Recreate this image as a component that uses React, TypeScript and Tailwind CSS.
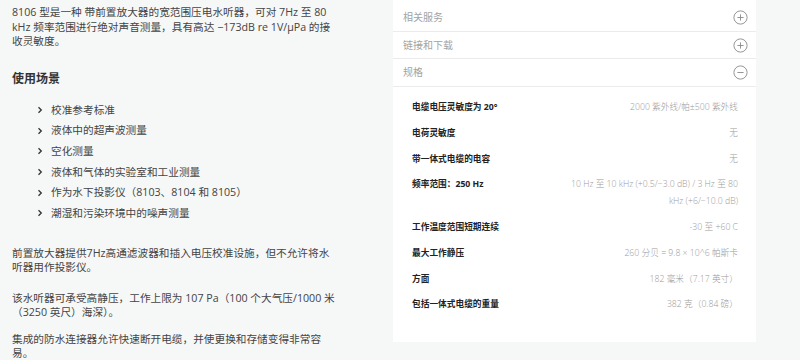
import React from "react";

const FONT = '"Open Sans", "Noto Sans CJK SC", sans-serif';

function Chevron() {
  return (
    <svg width="6" height="8" viewBox="0 0 6 8" className="shrink-0">
      <path d="M1.5 1.2 L4.3 4 L1.5 6.8" fill="none" stroke="#333" strokeWidth="1.3" />
    </svg>
  );
}

function CircleIcon({ plus }: { plus: boolean }) {
  return (
    <svg width="15" height="15" viewBox="0 0 15 15">
      <circle cx="7.5" cy="7.5" r="6.6" fill="none" stroke="#8a8a8a" strokeWidth="0.9" />
      <path d="M4.4 7.5 H10.6" stroke="#8a8a8a" strokeWidth="0.9" />
      {plus && <path d="M7.5 4.4 V10.6" stroke="#8a8a8a" strokeWidth="0.9" />}
    </svg>
  );
}

const uses = [
  "校准参考标准",
  "液体中的超声波测量",
  "空化测量",
  "液体和气体的实验室和工业测量",
  "作为水下投影仪（8103、8104 和 8105）",
  "潮湿和污染环境中的噪声测量",
];

const specs: [string, React.ReactNode][] = [
  ["电缆电压灵敏度为 20°", "2000 紫外线/帕±500 紫外线"],
  ["电荷灵敏度", "无"],
  ["带一体式电缆的电容", "无"],
  [
    "频率范围：250 Hz",
    <>
      10 Hz 至 10 kHz (+0.5/−3.0 dB) / 3 Hz 至 80
      <br />
      kHz (+6/−10.0 dB)
    </>,
  ],
  ["工作温度范围短期连续", "-30 至 +60 C"],
  ["最大工作静压", "260 分贝 = 9.8 × 10^6 帕斯卡"],
  ["方面", "182 毫米（7.17 英寸）"],
  ["包括一体式电缆的重量", "382 克（0.84 磅）"],
];

export default function App() {
  return (
    <div
      className="w-[800px] h-[360px] overflow-hidden bg-[#f6f7f7] flex"
      style={{ fontFamily: FONT }}
    >
      {/* Left column */}
      <div className="w-[393px] shrink-0 pl-[12px] pt-[5px] text-[#444] text-[10.67px] leading-[14.5px]">
        <p className="whitespace-nowrap">
          8106 型是一种 带前置放大器的宽范围压电水听器，可对 7Hz 至 80
          <br />
          kHz 频率范围进行绝对声音测量，具有高达 −173dB re 1V/µPa 的接
          <br />
          收灵敏度。
        </p>
        <h3 className="mt-[22px] text-[12px] leading-[16px] font-bold text-[#333]">使用场景</h3>
        <ul className="mt-[13px]">
          {uses.map((u) => (
            <li key={u} className="flex items-center h-[20.7px] pl-[25px] gap-[8px] whitespace-nowrap">
              <Chevron />
              <span>{u}</span>
            </li>
          ))}
        </ul>
        <p className="mt-[22px] whitespace-nowrap">
          前置放大器提供7Hz高通滤波器和插入电压校准设施，但不允许将水
          <br />
          听器用作投影仪。
        </p>
        <p className="mt-[16px] whitespace-nowrap">
          该水听器可承受高静压，工作上限为 107 Pa（100 个大气压/1000 米
          <br />
          （3250 英尺）海深）。
        </p>
        <p className="mt-[12px] whitespace-nowrap">
          集成的防水连接器允许快速断开电缆，并使更换和存储变得非常容
          <br />
          易。
        </p>
      </div>

      {/* Right card */}
      <div className="w-[363px] shrink-0 self-start bg-white pt-[4px] pb-[24px]">
        {[
          ["相关服务", true],
          ["链接和下载", true],
          ["规格", false],
        ].map(([t, p]) => (
          <div
            key={t as string}
            className="h-[27.7px] border-b border-[#ebebeb] flex items-center justify-between pl-[10px] pr-[8px]"
          >
            <span className="text-[10px] text-[#a3a3a3]">{t as string}</span>
            <CircleIcon plus={p as boolean} />
          </div>
        ))}
        <div className="pt-[8px] pl-[19px] pr-[18px]">
          {specs.map(([k, v]) => (
            <div key={k} className="flex justify-between py-[4.35px] leading-[17px] text-[8.7px]">
              <span className="font-bold text-[#222] whitespace-nowrap">{k}</span>
              <span className="text-right text-[#9a9a9a] font-light w-[170px]">{v}</span>
            </div>
          ))}
        </div>
      </div>
    </div>
  );
}
